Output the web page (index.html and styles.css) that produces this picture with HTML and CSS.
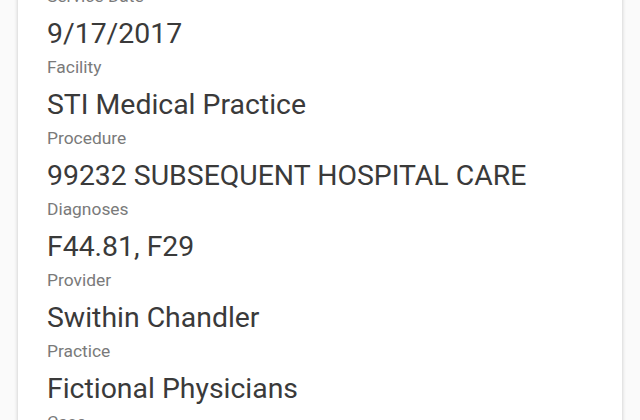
FILE: index.html
```html
<!DOCTYPE html>
<html lang="en">
<head>
    <meta charset="UTF-8">
    <title>claim detail</title>
    <link rel="stylesheet" href="styles.css">
</head>
<body>
    <div class="claim_card">
        <div class="c_field">
            <p class="c_label">Service Date</p>
            <p class="c_value">9/17/2017</p>
        </div>
        <div class="c_field">
            <p class="c_label">Facility</p>
            <p class="c_value">STI Medical Practice</p>
        </div>
        <div class="c_field">
            <p class="c_label">Procedure</p>
            <p class="c_value">99232 SUBSEQUENT HOSPITAL CARE</p>
        </div>
        <div class="c_field">
            <p class="c_label">Diagnoses</p>
            <p class="c_value">F44.81, F29</p>
        </div>
        <div class="c_field">
            <p class="c_label">Provider</p>
            <p class="c_value">Swithin Chandler</p>
        </div>
        <div class="c_field">
            <p class="c_label">Practice</p>
            <p class="c_value">Fictional Physicians</p>
        </div>
        <div class="c_field">
            <p class="c_label">Case</p>
            <p class="c_value">Open</p>
        </div>
    </div>
</body>
</html>
```
FILE: styles.css
```css
html, body {
    margin: 0;
    background-color: #fafafa;
    font-family: Roboto, "Liberation Sans", sans-serif;
    overflow: hidden;
}
.claim_card {
    margin: -16px 18px 0;
    padding: 0 29px 20px;
    background-color: #fff;
    box-shadow: 0 1px 4px rgba(0, 0, 0, 0.22);
    display: flex;
    flex-direction: column;
    gap: 3px;
}
.c_field p {
    margin: 0;
}
.c_label {
    font-size: 17.4px;
    line-height: 24px;
    color: #7a7a7a;
}
.c_value {
    margin-top: 8px !important;
    font-size: 28.4px;
    line-height: 36px;
    color: #3a3a3a;
}
```
